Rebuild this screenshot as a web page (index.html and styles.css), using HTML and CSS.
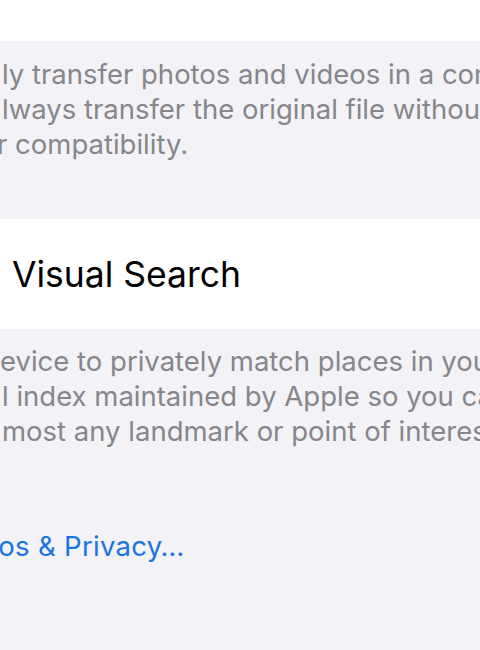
FILE: index.html
```html
<!DOCTYPE html>
<html lang="en">
<head>
  <meta charset="UTF-8">
  <title>Photos Settings</title>
  <link rel="stylesheet" href="styles.css">
</head>
<body>
  <div class="screen">
    <div class="cell cell-top"></div>

    <div class="footer footer-transfer">
      <div class="line">ly transfer photos and videos in a compatible</div>
      <div class="line">lways transfer the original file without checking</div>
      <div class="line cut">r compatibility.</div>
    </div>

    <div class="cell cell-toggle">
      <span class="cell-title">Enhanced Visual Search</span>
    </div>

    <div class="footer footer-search">
      <div class="line cut-small">evice to privately match places in your photos</div>
      <div class="line">l index maintained by Apple so you can search</div>
      <div class="line">most any landmark or point of interest.</div>
      <a class="footer-link" href="#">About Photos &amp; Privacy…</a>
    </div>
  </div>
</body>
</html>
```

FILE: styles.css
```css
body {
  margin: 0;
  background: #f2f2f7;
  font-family: "Inter", "Noto Sans", sans-serif;
  overflow: hidden;
}
.screen {
  width: 480px;
  height: 650px;
  overflow: hidden;
}
.cell {
  background: #fff;
  white-space: nowrap;
  overflow: hidden;
}
.cell-top {
  height: 41px;
}
.cell-toggle {
  height: 110px;
  display: flex;
  align-items: center;
}
.cell-title {
  font-size: 35.5px;
  color: #000;
  margin-left: -165px;
}
.footer {
  color: #86868b;
  font-size: 27.5px;
  line-height: 35px;
  white-space: nowrap;
}
.footer-transfer {
  height: 178px;
  padding-top: 16px;
  box-sizing: border-box;
}
.footer-search {
  padding-top: 15px;
}
.line {
  padding-left: 2px;
}
.line.cut {
  margin-left: -5px;
}
.line.cut-small {
  margin-left: -2px;
}
.footer-link {
  display: block;
  margin-top: 80px;
  margin-left: -149px;
  color: #1a73e0;
  letter-spacing: 0.3px;
  text-decoration: none;
}
```
